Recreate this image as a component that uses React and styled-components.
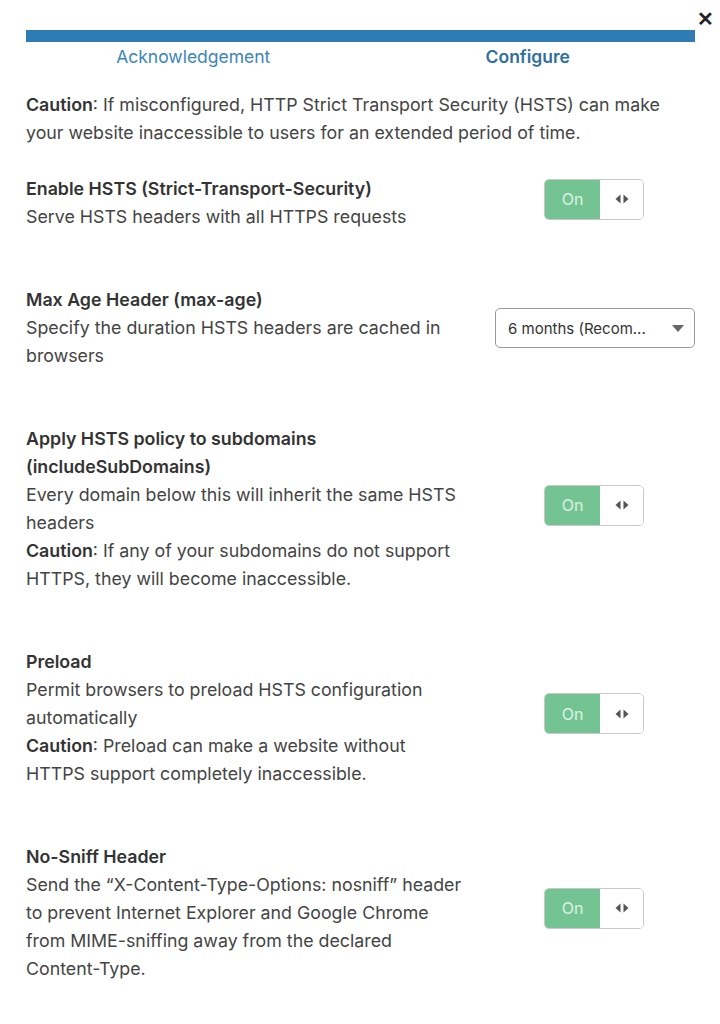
import React from 'react';
import styled, { createGlobalStyle } from 'styled-components';

const Global = createGlobalStyle`
  html, body { margin: 0; padding: 0; background: #fff; }
  body {
    font-family: Inter, "Liberation Sans", Arial, sans-serif;
    color: #444;
  }
`;

const Page = styled.div`
  width: 720px;
  box-sizing: border-box;
  padding: 30px 25px 20px 26px;
  position: relative;
`;

const Close = styled.button`
  position: absolute;
  top: 9px;
  right: 6px;
  border: none;
  background: none;
  padding: 0;
  font-size: 20px;
  font-weight: bold;
  color: #222;
  line-height: 20px;
  cursor: pointer;
`;

const Progress = styled.div`
  height: 12px;
  background: #2d7db4;
`;

const Tabs = styled.div`
  display: grid;
  grid-template-columns: 1fr 1fr;
  margin-top: 3px;
`;

const Tab = styled.div`
  text-align: center;
  font-size: 17.5px;
  line-height: 24px;
  color: ${({ active }) => (active ? '#2e6f9e' : '#3b86b8')};
  font-weight: ${({ active }) => (active ? 600 : 400)};
`;

const Intro = styled.p`
  margin: 22px 0 28px;
  font-size: 17.8px;
  line-height: 28px;
`;

const Strong = styled.b`
  font-weight: 600;
  color: #333;
`;

const Row = styled.div`
  display: grid;
  grid-template-columns: 469px 1fr;
  align-items: center;
  margin-bottom: 55px;

  &:last-child {
    margin-bottom: 0;
  }
`;

const Text = styled.div`
  font-size: 17.8px;
  line-height: 28px;
  max-width: 436px;
`;

const Title = styled.div`
  font-weight: 600;
  color: #333;
`;

const Control = styled.div`
  display: flex;
  justify-content: center;
`;

const Toggle = styled.div`
  display: flex;
  width: 100px;
  height: 41px;
  box-sizing: border-box;
  border: 1px solid #c8c8c8;
  border-radius: 5px;
  overflow: hidden;
  margin-left: -2px;
  margin-top: ${({ up }) => up || 0}px;
`;

const ToggleOn = styled.div`
  width: 55px;
  background: #74c493;
  color: #dcf1e3;
  font-size: 16px;
  display: flex;
  align-items: center;
  justify-content: center;
`;

const ToggleKnob = styled.div`
  flex: 1;
  background: #fff;
  display: flex;
  align-items: center;
  justify-content: center;
`;

const Select = styled.div`
  width: 200px;
  height: 40px;
  box-sizing: border-box;
  border: 1px solid #9a9a9a;
  border-radius: 5px;
  display: flex;
  align-items: center;
  justify-content: space-between;
  padding: 0 10px 0 12px;
  font-size: 15px;
  color: #333;
`;

const Caret = () => (
  <svg width="12" height="7" viewBox="0 0 12 7">
    <path d="M0 0h12L6 7z" fill="#666" />
  </svg>
);

const Arrows = () => (
  <svg width="14" height="10" viewBox="0 0 14 10">
    <path d="M5.5 0.5v9L0.5 5z" fill="#555" />
    <path d="M8.5 0.5v9l5-4.5z" fill="#555" />
  </svg>
);

const Switch = ({ up }) => (
  <Toggle up={up}>
    <ToggleOn>On</ToggleOn>
    <ToggleKnob><Arrows /></ToggleKnob>
  </Toggle>
);

const App = () => (
  <>
    <Global />
    <Page>
      <Close aria-label="close">✕</Close>
      <Progress />
      <Tabs>
        <Tab>Acknowledgement</Tab>
        <Tab active>Configure</Tab>
      </Tabs>
      <Intro>
        <Strong>Caution</Strong>: If misconfigured, HTTP Strict Transport Security (HSTS) can make
        your website inaccessible to users for an extended period of time.
      </Intro>

      <Row>
        <Text>
          <Title>Enable HSTS (Strict-Transport-Security)</Title>
          Serve HSTS headers with all HTTPS requests
        </Text>
        <Control><Switch up={-8} /></Control>
      </Row>

      <Row>
        <Text>
          <Title>Max Age Header (max-age)</Title>
          Specify the duration HSTS headers are cached in browsers
        </Text>
        <Control>
          <Select>
            <span>6 months (Recom...</span>
            <Caret />
          </Select>
        </Control>
      </Row>

      <Row>
        <Text>
          <Title>Apply HSTS policy to subdomains (includeSubDomains)</Title>
          Every domain below this will inherit the same HSTS headers
          <br />
          <Strong>Caution</Strong>: If any of your subdomains do not support HTTPS, they will
          become inaccessible.
        </Text>
        <Control><Switch up={-8} /></Control>
      </Row>

      <Row>
        <Text>
          <Title>Preload</Title>
          Permit browsers to preload HSTS configuration automatically
          <br />
          <Strong>Caution</Strong>: Preload can make a website without HTTPS support completely
          inaccessible.
        </Text>
        <Control><Switch up={-9} /></Control>
      </Row>

      <Row>
        <Text>
          <Title>No-Sniff Header</Title>
          Send the “X-Content-Type-Options: nosniff” header to prevent Internet Explorer and
          Google Chrome from MIME-sniffing away from the declared Content-Type.
        </Text>
        <Control><Switch up={-10} /></Control>
      </Row>
    </Page>
  </>
);

export default App;
